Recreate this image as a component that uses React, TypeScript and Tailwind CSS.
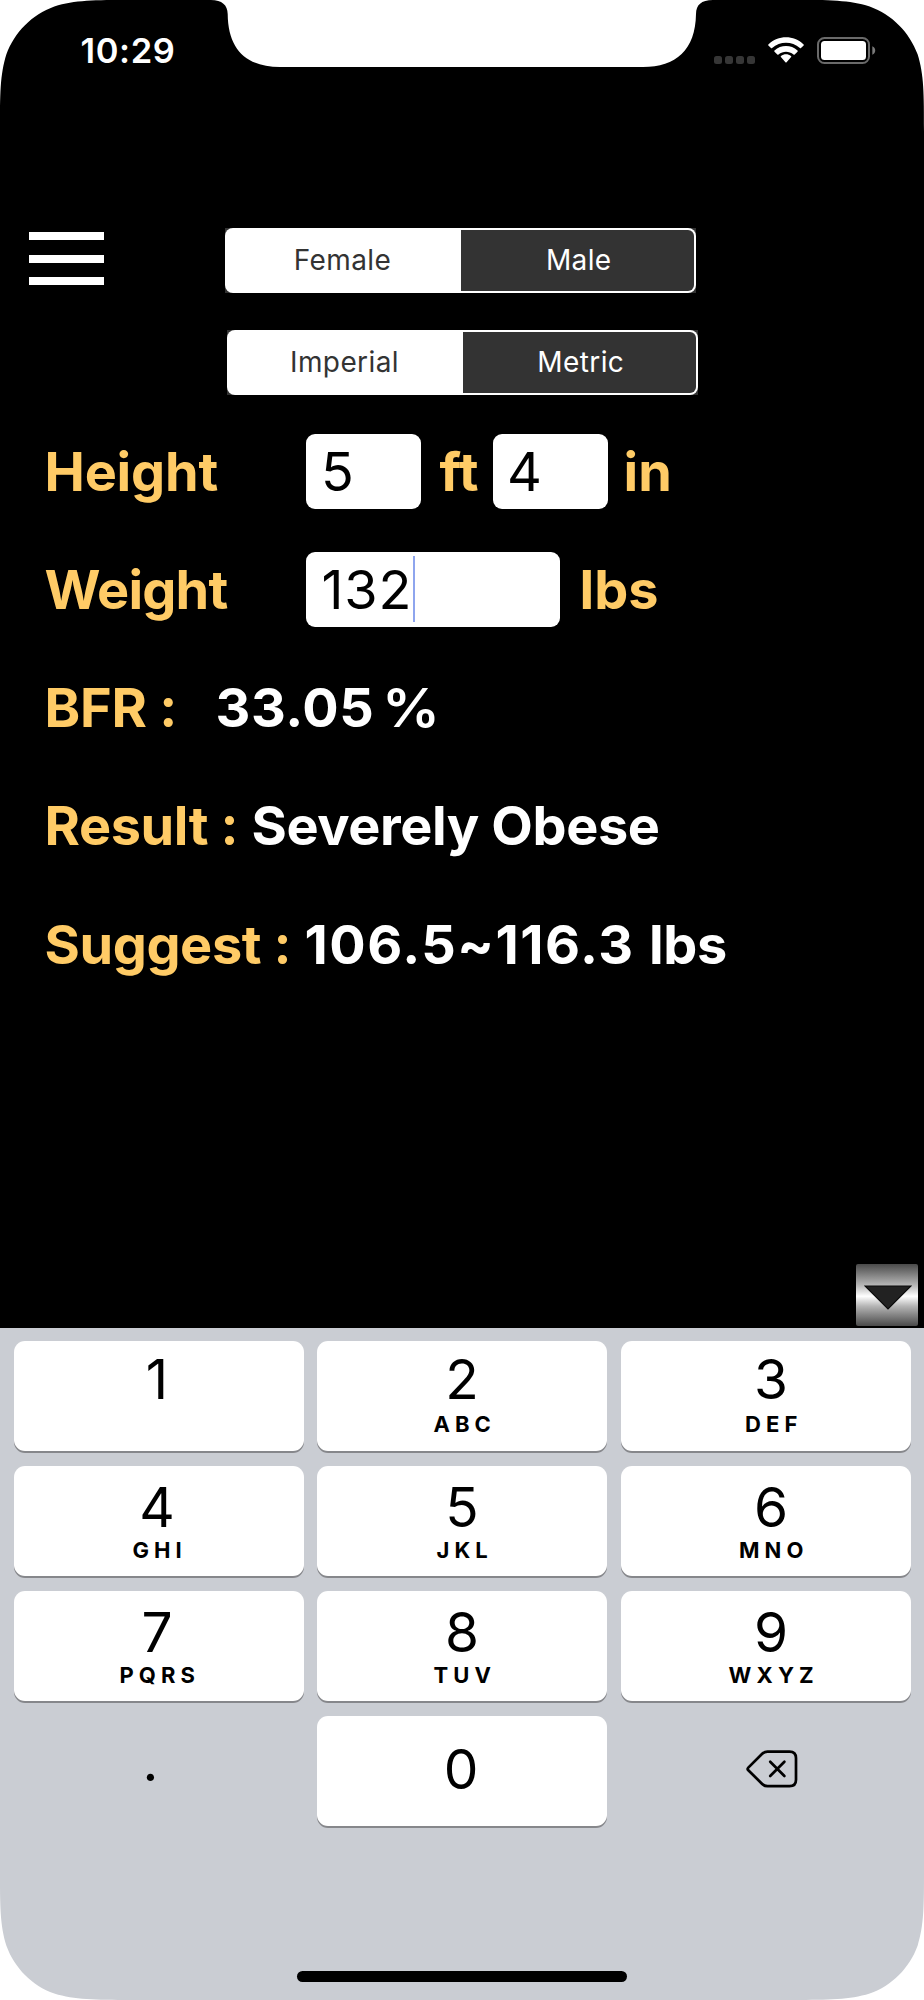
import { useState } from 'react'
import clsx from 'clsx'

type SegmentedProps = {
  options: [string, string]
  className?: string
}

const keys = [
  { digit: '1', letters: '' },
  { digit: '2', letters: 'ABC' },
  { digit: '3', letters: 'DEF' },
  { digit: '4', letters: 'GHI' },
  { digit: '5', letters: 'JKL' },
  { digit: '6', letters: 'MNO' },
  { digit: '7', letters: 'PQRS' },
  { digit: '8', letters: 'TUV' },
  { digit: '9', letters: 'WXYZ' },
]

const keyClass = 'h-[110px] rounded-[11px] bg-white shadow-[0_2px_0_#86878b]'
const fieldClass = 'flex h-[75px] items-center rounded-[9px] bg-white text-black'

function StatusBar() {
  return (
    <div className="flex h-[101px] items-center justify-between pl-[80.5px] pr-[48px]">
      <span className="pt-px text-[34.5px] font-semibold leading-none tracking-[0.6px]">10:29</span>
      <div className="flex items-center">
        <div className="mt-[18px] flex gap-[3px]">
          {[0, 1, 2, 3].map((i) => (
            <span key={i} className="size-[8px] rounded-[2.5px] bg-[#363636]" />
          ))}
        </div>
        <svg className="ml-[13px]" width="36" height="27" viewBox="0 0 36 27" fill="#fff">
          <path d="M0.4 7.4C10 -2.2 26 -2.2 35.6 7.4Q36.2 8 35.6 8.6L33 11.1Q32.5 11.6 31.9 11.1C24 3.9 12 3.9 4.1 11.1Q3.5 11.6 3 11.1L0.4 8.6Q-0.2 8 0.4 7.4Z" />
          <path d="M6.5 13.5C13 7.6 23 7.6 29.5 13.5Q30.1 14.1 29.5 14.7L26.7 17.4Q26.1 17.9 25.5 17.4C21 13.7 15 13.7 10.5 17.4Q9.9 17.9 9.3 17.4L6.5 14.7Q5.9 14.1 6.5 13.5Z" />
          <path d="M12.9 20Q12.4 19.5 13 19C16 16.7 20 16.7 23 19Q23.6 19.5 23.1 20L18.6 25.2Q18 25.8 17.4 25.2Z" />
        </svg>
        <svg className="ml-[13px]" width="59" height="27" viewBox="0 0 59 27">
          <rect x="1" y="1" width="51" height="25" rx="6.5" fill="none" stroke="#6a6a6a" strokeWidth="2" />
          <rect x="4" y="4" width="45" height="19" rx="3.5" fill="#fff" />
          <path d="M55.3 9.2C59.2 11 59.2 16 55.3 17.8Z" fill="#7a7a7a" />
        </svg>
      </div>
    </div>
  )
}

function Segmented({ options, className }: SegmentedProps) {
  return (
    <div className={clsx('h-[65px] w-[470.5px] bg-[#333333]', className)}>
      <div className="flex h-full rounded-[8px] bg-white py-[2px] pr-[2px] text-[28px] leading-[60px] tracking-[0.4px]">
        <button className="w-[236px] pb-px pr-px text-[#333333]">{options[0]}</button>
        <button className="flex-1 rounded-r-[6px] bg-[#333333] pb-px pl-[3px] text-white">{options[1]}</button>
      </div>
    </div>
  )
}

// outer corners and the camera notch of the phone
function DeviceMask() {
  const corner = 'M0 0V131C0 94 0 75 6.4 54.3C14.5 32 32 14.5 54.3 6.4C75 0 94 0 131 0Z'
  return (
    <svg className="pointer-events-none absolute inset-0" width="924" height="2000" viewBox="0 0 924 2000" fill="#fff">
      <path d={corner} />
      <path d={corner} transform="translate(924 0) scale(-1 1)" />
      <path d={corner} transform="translate(0 2000) scale(1 -1)" />
      <path d={corner} transform="translate(924 2000) scale(-1 -1)" />
      <path d="M211 0C222 0 227.5 5 227.7 14C228 50 247 67 280 67H643C676 67 695.5 50 696 14C696.2 5 701 0 713 0Z" />
    </svg>
  )
}

function Keypad() {
  return (
    <div className="h-[672px] bg-[#cacdd3] pt-[13px] text-black">
      <div className="grid grid-cols-[290px_290px_290px] justify-center gap-x-[13.5px] gap-y-[15px]">
        {keys.map(({ digit, letters }, i) => (
          <button
            key={digit}
            className={clsx(
              keyClass,
              'flex flex-col items-center',
              i < 3 ? 'pt-[10px]' : 'pt-[12.5px]',
              i % 3 === 2 && 'pl-[11px]',
              i % 3 === 0 && 'pr-[3px]',
            )}
          >
            <span className="h-[56px] text-[55px] leading-[56px]">{digit}</span>
            <span
              className={clsx(
                'pl-[5.4px] text-[22px] font-bold leading-[22px] tracking-[5.1px]',
                i < 3 ? 'mt-[6px]' : 'mt-[4.5px]',
              )}
            >
              {letters}
            </span>
          </button>
        ))}
        <button className="h-[110px] pb-[20px] pr-[16px] text-[55px] leading-[88px]">.</button>
        <button className={clsx(keyClass, 'pb-[4px] pr-[2px] text-[55px] leading-none')}>0</button>
        <button className="flex h-[110px] items-center justify-center pb-[5px] pl-[12px]">
          <svg width="52" height="38" viewBox="0 0 52 38" fill="none" stroke="#000" strokeLinecap="round" strokeLinejoin="round" strokeWidth="2.7">
            <path d="M2.3 17.6L16.2 3.8Q18.4 1.6 21.5 1.6H43.5Q50 1.6 50 8.1V29.7Q50 36.2 43.5 36.2H21.5Q18.4 36.2 16.2 34L2.3 20.2Q1 18.9 2.3 17.6Z" />
            <path d="M24.2 11.8L38.4 26M38.4 11.8L24.2 26" />
          </svg>
        </button>
      </div>
      <div className="mx-auto mt-[145px] h-[11px] w-[330px] rounded-full bg-black" />
    </div>
  )
}

export default function App() {
  const [feet] = useState('5')
  const [inches] = useState('4')
  const [weight] = useState('132')

  return (
    <div className="relative flex h-[2000px] w-[924px] flex-col overflow-hidden bg-black font-['Inter',sans-serif] text-white">
      <StatusBar />

      <div className="mt-[127px] flex items-start">
        <button className="ml-[29px] mt-[4px] flex w-[75px] flex-col gap-[14.5px]">
          <span className="h-[8px] bg-white" />
          <span className="h-[8px] bg-white" />
          <span className="h-[8px] bg-white" />
        </button>
        <Segmented options={['Female', 'Male']} className="ml-[121px]" />
      </div>
      <Segmented options={['Imperial', 'Metric']} className="ml-[227px] mt-[37px]" />

      <div className="mt-[38.5px] flex flex-col gap-[43.25px] pl-[44.5px] text-[54px] font-bold leading-[75px]">
        <div className="flex h-[75px] text-[#ffcb66]">
          <span className="w-[261.5px] tracking-[-0.2px]">Height</span>
          <div className={clsx(fieldClass, 'w-[115px] pl-[15px] font-normal')}>{feet}</div>
          <span className="w-[72px] pl-[18.5px]">ft</span>
          <div className={clsx(fieldClass, 'w-[115px] pl-[14px] font-normal')}>{inches}</div>
          <span className="pl-[15.5px]">in</span>
        </div>
        <div className="flex h-[75px] text-[#ffcb66]">
          <span className="w-[261.5px] tracking-[-0.8px]">Weight</span>
          <div className={clsx(fieldClass, 'w-[253.5px] pl-[15.5px] font-normal tracking-[0.9px]')}>
            {weight}
            <span className="ml-px h-[66px] w-[2px] bg-[#8ea5ee]" />
          </div>
          <span className="pl-[20px]">lbs</span>
        </div>
        <div className="flex h-[75px]">
          <span className="w-[171px] tracking-[-0.2px] text-[#ffcb66]">BFR :</span>
          <span className="tracking-[0.6px]">33.05</span>
          <span className="ml-[8px] origin-left scale-x-[1.07] font-semibold">%</span>
        </div>
        <div className="flex h-[75px]">
          <span className="w-[207px] tracking-[-0.4px] text-[#ffcb66]">Result :</span>
          <span className="tracking-[-0.4px]">Severely Obese</span>
        </div>
        <div className="flex h-[75px] whitespace-pre">
          <span className="w-[260px] tracking-[-0.4px] text-[#ffcb66]">Suggest :</span>
          <span className="tracking-[1.5px]">106.5~116.3 </span>
          <span className="tracking-[-0.3px]">lbs</span>
        </div>
      </div>

      <div className="mt-auto">
        <button className="mb-[2px] ml-[856px] flex h-[62px] w-[62px] items-start justify-center rounded-[2px] bg-[linear-gradient(#4a4a4a,#8a8a8a_20%,#bdbdbd_36%,#ffffff_52%,#b5b5b5_68%,#858585_82%,#4a4a4a)] pl-[2px] pt-[21px]">
          <svg width="48" height="25" viewBox="0 0 48 25">
            <path d="M1 1H47L24 24Z" fill="#222" stroke="#0a0a0a" strokeWidth="1.2" />
          </svg>
        </button>
        <Keypad />
      </div>

      <DeviceMask />
    </div>
  )
}
